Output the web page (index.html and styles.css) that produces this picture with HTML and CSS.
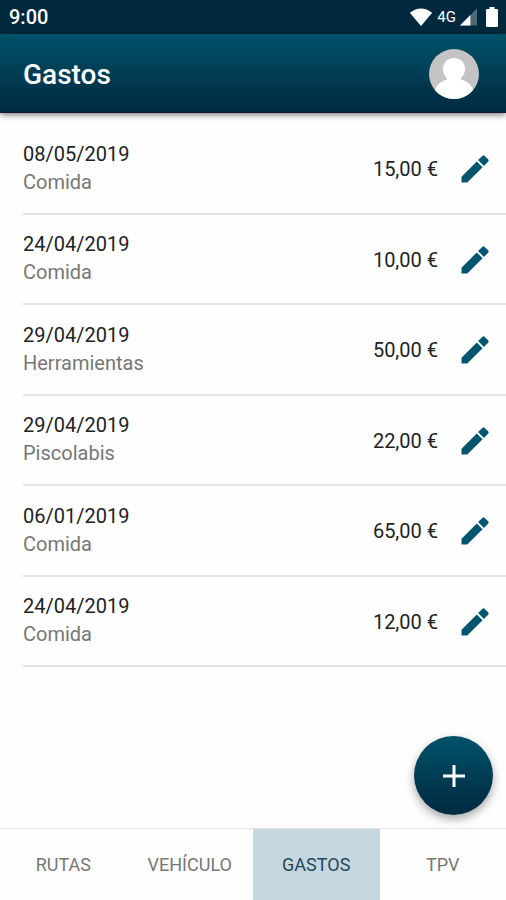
FILE: index.html
```html
<!DOCTYPE html>
<html lang="es">
<head>
<meta charset="utf-8">
<meta name="viewport" content="width=device-width, initial-scale=1">
<title>Gastos</title>
<link rel="stylesheet" href="styles.css">
</head>
<body>
<svg class="sprite" aria-hidden="true">
  <symbol id="pencil" viewBox="0 0 28 28">
    <path d="M0.5 21.7V27.5H6.3L21.6 12.2L15.8 6.4ZM22.9 10.9L27.1 6.7Q28.2 5.5 27.1 4.3L23.7 0.9Q22.5-0.2 21.3 0.9L17.1 5.1Z"/>
  </symbol>
</svg>
<div class="status">
  <span class="clock">9:00</span>
  <div class="signals">
    <svg class="wifi" viewBox="0 0 24 18" aria-hidden="true"><path d="M0.8 4.8Q12-3.8 23.2 4.8L12 18Z"/></svg>
    <span class="network">4G</span>
    <svg class="cell" viewBox="0 0 18 18" aria-hidden="true"><path class="dim" d="M18 0V18H0Z"/><path d="M11 7V18H0Z"/></svg>
    <svg class="battery" viewBox="0 0 12 20" aria-hidden="true"><path d="M3.5 0H8.5V2H11Q12 2 12 3V19Q12 20 11 20H1Q0 20 0 19V3Q0 2 1 2H3.5Z"/></svg>
  </div>
</div>
<header class="bar">
  <h1>Gastos</h1>
  <button class="avatar" aria-label="Perfil">
    <svg viewBox="0 0 50 50" aria-hidden="true">
      <circle class="disc" cx="25" cy="25" r="25"/>
      <path class="person" d="M25 9C18 9 14 14 14 20C14 24 15.5 27 18 29V30.5C12 32 7.5 36 6 41.2Q14 50 25 50Q36 50 44 41.2C42.5 36 38 32 32 30.5V29C34.5 27 36 24 36 20C36 14 32 9 25 9Z"/>
    </svg>
  </button>
</header>
<main>
  <ul class="expenses">
    <li><div class="info"><span class="date">08/05/2019</span><span class="kind">Comida</span></div><span class="amount">15,00 €</span><button class="edit" aria-label="Editar"><svg aria-hidden="true"><use href="#pencil"/></svg></button></li>
    <li><div class="info"><span class="date">24/04/2019</span><span class="kind">Comida</span></div><span class="amount">10,00 €</span><button class="edit" aria-label="Editar"><svg aria-hidden="true"><use href="#pencil"/></svg></button></li>
    <li><div class="info"><span class="date">29/04/2019</span><span class="kind">Herramientas</span></div><span class="amount">50,00 €</span><button class="edit" aria-label="Editar"><svg aria-hidden="true"><use href="#pencil"/></svg></button></li>
    <li><div class="info"><span class="date">29/04/2019</span><span class="kind">Piscolabis</span></div><span class="amount">22,00 €</span><button class="edit" aria-label="Editar"><svg aria-hidden="true"><use href="#pencil"/></svg></button></li>
    <li><div class="info"><span class="date">06/01/2019</span><span class="kind">Comida</span></div><span class="amount">65,00 €</span><button class="edit" aria-label="Editar"><svg aria-hidden="true"><use href="#pencil"/></svg></button></li>
    <li><div class="info"><span class="date">24/04/2019</span><span class="kind">Comida</span></div><span class="amount">12,00 €</span><button class="edit" aria-label="Editar"><svg aria-hidden="true"><use href="#pencil"/></svg></button></li>
  </ul>
  <button class="add" aria-label="Añadir gasto"><svg viewBox="0 0 22 22" aria-hidden="true"><path d="M9.5 0H12.5V9.5H22V12.5H12.5V22H9.5V12.5H0V9.5H9.5Z"/></svg></button>
</main>
<nav class="tabs">
  <a href="#rutas">RUTAS</a>
  <a href="#vehiculo">VEHÍCULO</a>
  <a href="#gastos" class="active" aria-current="page">GASTOS</a>
  <a href="#tpv">TPV</a>
</nav>
</body>
</html>
```
FILE: styles.css
```css
* {
  box-sizing: border-box;
}

body {
  margin: 0;
  min-height: 100vh;
  display: flex;
  flex-direction: column;
  background: #fefefe;
  font-family: Roboto, "Liberation Sans", sans-serif;
  font-size: 20px;
}

button {
  border: 0;
  padding: 0;
  background: none;
  cursor: pointer;
}

svg {
  display: block;
}

.sprite {
  position: absolute;
  width: 0;
  height: 0;
}

.status {
  display: flex;
  align-items: center;
  justify-content: space-between;
  height: 34px;
  padding: 0 8px 0 9px;
  background: #00293d;
  color: #fff;
}

.clock {
  font-weight: 500;
  line-height: 36px;
}

.signals {
  display: flex;
  align-items: center;
  fill: #fff;
}

.wifi {
  width: 24px;
  height: 18px;
}

.network {
  margin: 0 4px;
  font-size: 15px;
}

.cell {
  width: 17px;
  height: 18px;
}

.dim {
  opacity: 0.3;
}

.battery {
  width: 12px;
  height: 20px;
  margin-left: 9px;
}

.bar {
  z-index: 1;
  display: flex;
  align-items: center;
  justify-content: space-between;
  height: 79px;
  padding: 2px 27px 0 23px;
  background: linear-gradient(#00526a, #00293f);
  border-bottom: 1px solid #1c1238;
  box-shadow: 0 2px 6px rgba(0, 0, 0, 0.5);
}

h1 {
  margin: 0;
  color: #fff;
  font-size: 28px;
  font-weight: 500;
}

.avatar {
  width: 50px;
  height: 50px;
}

.avatar svg {
  width: 50px;
  height: 50px;
}

.disc {
  fill: #c4c4c4;
}

.person {
  fill: #fff;
}

main {
  flex: 1;
  display: flex;
  flex-direction: column;
  justify-content: space-between;
  padding: 11px 0 13px;
}

.expenses {
  display: grid;
  grid-auto-rows: 1fr;
  min-height: 543px;
  margin: 0 0 0 23px;
  padding: 0;
  list-style: none;
}

.expenses li {
  display: flex;
  align-items: center;
  padding: 2px 17px 0 0;
  border-bottom: 2px solid #e4e4e4;
}

.info {
  flex: 1;
  display: flex;
  flex-direction: column;
  padding-bottom: 3px;
  line-height: 28px;
}

.date {
  color: #222;
}

.kind {
  color: #777;
}

.amount {
  color: #222;
}

.edit {
  width: 28px;
  height: 28px;
  margin-left: 23px;
  fill: #00566f;
}

.edit svg {
  width: 28px;
  height: 28px;
}

.add {
  align-self: flex-end;
  display: grid;
  place-items: center;
  width: 79px;
  height: 79px;
  margin-right: 13px;
  border-radius: 50%;
  background: linear-gradient(#00526a, #00293f);
  box-shadow: 0 4px 10px rgba(0, 0, 0, 0.35);
  fill: #fff;
}

.add svg {
  width: 22px;
  height: 22px;
}

.tabs {
  display: grid;
  grid-template-columns: repeat(4, 1fr);
  height: 72px;
  border-top: 1px solid #e4e4e4;
}

.tabs a {
  display: grid;
  place-items: center;
  color: #777;
  font-size: 18px;
  text-decoration: none;
}

.tabs .active {
  background: #c5d8df;
  color: #1f475b;
}
```
